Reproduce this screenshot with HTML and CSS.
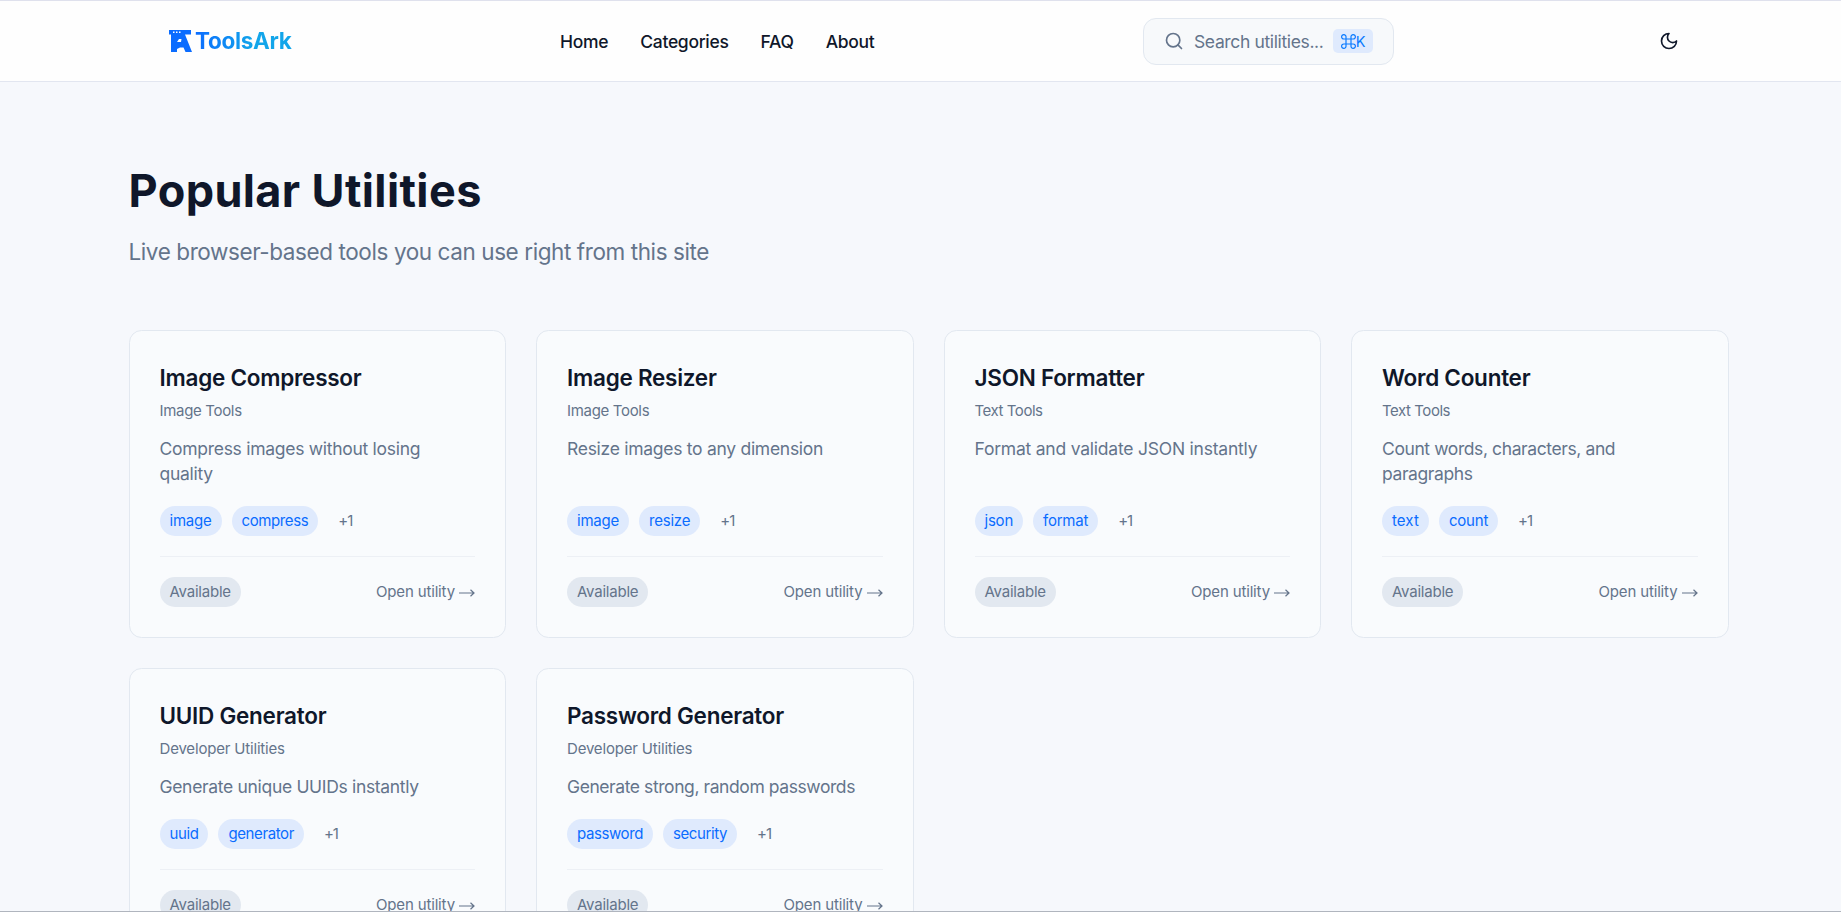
FILE: index.html
```
<!DOCTYPE html>
<html lang="en">
<head>
<meta charset="utf-8">
<title>ToolsArk</title>
<link rel="stylesheet" href="styles.css">
</head>
<body>
<header class="header">
  <a class="brand">
    <svg class="brand-icon" width="23" height="22" viewBox="0 0 23 22"><path fill="#0a6cff" fill-rule="evenodd" d="M0 0H22V4.5H16L23 22H16.5L14.5 17.5H11L8 19V22H2V4.5H0ZM8 12H12L12.5 9H10ZM4 1.5V3H5.5V1.5ZM7 1.5V3H8.5V1.5ZM10 1.5V3H11.5V1.5Z"/></svg>
    <span class="brand-name">ToolsArk</span>
  </a>
  <nav class="nav"><a>Home</a><a>Categories</a><a>FAQ</a><a>About</a></nav>
  <div class="search">
    <svg width="20" height="20" viewBox="0 0 24 24" fill="none" stroke="currentColor" stroke-width="2" stroke-linecap="round"><circle cx="11" cy="11" r="8"/><path d="m21 21-4.3-4.3"/></svg>
    <span class="search-text">Search utilities...</span>
    <kbd class="kbd"><svg width="15" height="15" viewBox="0 0 15 15" fill="none" stroke="currentColor" stroke-width="1.2"><path d="M5 5H10V10H5ZM5 5H3A2.2 2.2 0 1 1 5 3ZM10 5V3A2.2 2.2 0 1 1 12 5ZM10 10H12A2.2 2.2 0 1 1 10 12ZM5 10V12A2.2 2.2 0 1 1 3 10Z"/></svg><span class="key">K</span></kbd>
  </div>
  <svg class="moon" width="20" height="20" viewBox="0 0 24 24" fill="none" stroke="currentColor" stroke-width="2" stroke-linecap="round" stroke-linejoin="round"><path d="M12 3a6 6 0 0 0 9 9 9 9 0 1 1-9-9Z"/></svg>
</header>
<main class="main">
  <h1 class="heading">Popular Utilities</h1>
  <p class="sub">Live browser-based tools you can use right from this site</p>
  <div class="grid">
    <article class="card compressor"><h2 class="title">Image Compressor</h2><p class="cat">Image Tools</p><p class="desc">Compress images without losing quality</p><div class="tags"><span class="tag">image</span><span class="tag snug">compress</span><span class="more">+1</span></div><div class="foot"><span class="status">Available</span><span class="open">Open utility <svg class="arrow" width="16" height="8" viewBox="0 0 16 8"><path d="M0 4H15M11.5 .8 15 4 11.5 7.2"/></svg></span></div></article>
    <article class="card resizer"><h2 class="title">Image Resizer</h2><p class="cat">Image Tools</p><p class="desc">Resize images to any dimension</p><div class="tags"><span class="tag">image</span><span class="tag">resize</span><span class="more">+1</span></div><div class="foot"><span class="status">Available</span><span class="open">Open utility <svg class="arrow" width="16" height="8" viewBox="0 0 16 8"><path d="M0 4H15M11.5 .8 15 4 11.5 7.2"/></svg></span></div></article>
    <article class="card json"><h2 class="title">JSON Formatter</h2><p class="cat text-cat">Text Tools</p><p class="desc">Format and validate JSON instantly</p><div class="tags"><span class="tag">json</span><span class="tag">format</span><span class="more">+1</span></div><div class="foot"><span class="status">Available</span><span class="open">Open utility <svg class="arrow" width="16" height="8" viewBox="0 0 16 8"><path d="M0 4H15M11.5 .8 15 4 11.5 7.2"/></svg></span></div></article>
    <article class="card counter"><h2 class="title">Word Counter</h2><p class="cat text-cat">Text Tools</p><p class="desc">Count words, characters, and paragraphs</p><div class="tags"><span class="tag loose">text</span><span class="tag">count</span><span class="more">+1</span></div><div class="foot"><span class="status">Available</span><span class="open">Open utility <svg class="arrow" width="16" height="8" viewBox="0 0 16 8"><path d="M0 4H15M11.5 .8 15 4 11.5 7.2"/></svg></span></div></article>
    <article class="card uuid"><h2 class="title">UUID Generator</h2><p class="cat dev-cat">Developer Utilities</p><p class="desc">Generate unique UUIDs instantly</p><div class="tags"><span class="tag snug">uuid</span><span class="tag snug">generator</span><span class="more">+1</span></div><div class="foot"><span class="status">Available</span><span class="open">Open utility <svg class="arrow" width="16" height="8" viewBox="0 0 16 8"><path d="M0 4H15M11.5 .8 15 4 11.5 7.2"/></svg></span></div></article>
    <article class="card password"><h2 class="title">Password Generator</h2><p class="cat dev-cat">Developer Utilities</p><p class="desc">Generate strong, random passwords</p><div class="tags"><span class="tag snug">password</span><span class="tag snug">security</span><span class="more">+1</span></div><div class="foot"><span class="status">Available</span><span class="open">Open utility <svg class="arrow" width="16" height="8" viewBox="0 0 16 8"><path d="M0 4H15M11.5 .8 15 4 11.5 7.2"/></svg></span></div></article>
  </div>
</main>
</body>
</html>
```
FILE: styles.css
```
* { box-sizing: border-box; margin: 0; padding: 0; }
body { height: 912px; overflow: hidden; background: #f6f8fc; color: #0f172a; font-family: Inter, "Liberation Sans", sans-serif; border-bottom: 1px solid #b0b5be; display: flex; flex-direction: column; }
.header { flex: none; height: 82px; padding-left: 169px; border-top: 1px solid #dfe1ed; border-bottom: 1px solid #e2e6f0; background: #fefefe; display: flex; align-items: center; }
.brand { width: 391px; display: flex; align-items: center; gap: 3px; }
.brand-name { margin-top: -1px; font-size: 22.5px; font-weight: 700; letter-spacing: -0.3px; background: linear-gradient(90deg, #0a6cff, #12a5ea 60%); -webkit-background-clip: text; background-clip: text; color: transparent; }
.nav { width: 583px; padding-top: 1px; display: flex; gap: 32px; font-size: 17.5px; font-weight: 500; letter-spacing: -0.3px; }
.search { width: 251px; height: 47px; border: 1px solid #e2e8f0; border-radius: 13px; background: #f7f9fb; color: #64748b; display: flex; align-items: center; padding-left: 20px; font-size: 17.5px; }
.search-text { margin-left: 10px; width: 139px; padding-top: 1px; letter-spacing: -0.36px; white-space: nowrap; }
.kbd { width: 40px; height: 24px; border-radius: 5px; background: #dfeafd; color: #0a7aff; font: 15px Inter, sans-serif; display: flex; align-items: center; justify-content: center; }
.key { width: 9px; margin-left: -0.5px; font-size: 14.5px; }
.moon { margin-left: 265px; }
.main { flex: 1; min-height: 0; overflow: hidden; padding: 80px 112.5px 0 128.5px; }
.heading { font-size: 45px; line-height: 57px; font-weight: 700; letter-spacing: 0.38px; }
.sub { margin-top: 18px; font-size: 22.5px; line-height: 30px; letter-spacing: -0.41px; color: #64748b; }
.grid { margin-top: 63px; display: grid; grid-template-columns: repeat(4, 1fr); gap: 30px; }
.card { border: 1px solid #e2e8f0; border-radius: 12.5px; background: #f9fbfd; padding: 30px; display: flex; flex-direction: column; color: #64748b; }
.title { color: #0f172a; font-size: 22.5px; line-height: 33px; font-weight: 600; letter-spacing: -0.26px; }
.cat { margin-top: 7px; font-size: 15px; line-height: 20px; letter-spacing: -0.32px; }
.text-cat { letter-spacing: -0.45px; }
.dev-cat { letter-spacing: -0.18px; }
.desc { margin-top: 15px; flex: 1; font-size: 17.5px; line-height: 25px; letter-spacing: -0.28px; }
.json .desc { letter-spacing: -0.22px; }
.counter .desc { letter-spacing: -0.4px; }
.uuid .desc { letter-spacing: -0.32px; }
.password .desc { letter-spacing: -0.42px; }
.tags { margin-top: 20px; display: flex; gap: 10px; }
.tag, .more, .status { height: 30px; line-height: 30px; border-radius: 15px; padding: 0 10px; font-size: 15px; letter-spacing: -0.22px; }
.tag { background: #dfeafd; color: #0a6cff; }
.tag.snug { letter-spacing: -0.4px; }
.tag.loose { letter-spacing: 0.1px; }
.more { letter-spacing: -1px; }
.foot { margin-top: 20px; border-top: 1px solid #edf0f5; padding-top: 20px; display: flex; justify-content: space-between; align-items: center; font-size: 15px; }
.status { background: #e2e8f0; }
.open { letter-spacing: -0.15px; margin-top: -1px; }
.arrow { fill: none; stroke: currentColor; stroke-width: 1.2; }
```
